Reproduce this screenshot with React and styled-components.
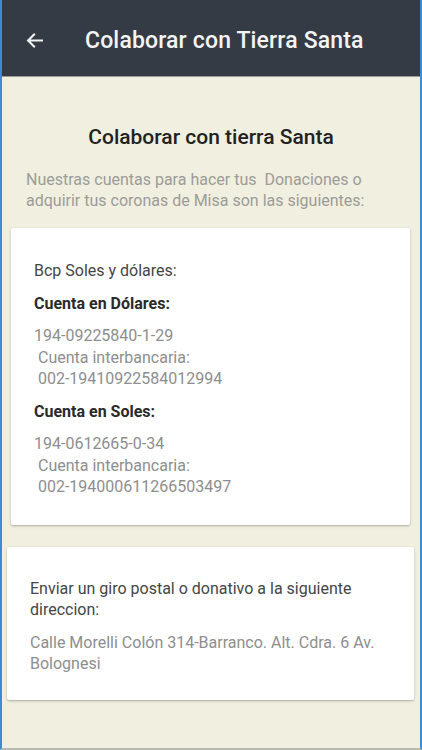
import React from "react";
import styled, { createGlobalStyle } from "styled-components";

const Global = createGlobalStyle`
  html, body { margin: 0; padding: 0; background: #f1efe0; }
  body { font-family: Roboto, "Noto Sans", Arial, sans-serif; }
  * { box-sizing: border-box; }
`;

const Frame = styled.div`
  width: 422px;
  height: 750px;
  background: #f1efe0;
  border-left: 2px solid #3d8ad6;
  border-right: 2px solid #3d8ad6;
  border-bottom: 2px solid #b9b9b4;
  display: flex;
  flex-direction: column;
  overflow: hidden;
`;

const Toolbar = styled.header`
  height: 77px;
  flex: none;
  background: #343b44;
  border-bottom: 1px solid #9a9c98;
  display: flex;
  align-items: center;
  padding: 5px 0 0 21px;
  color: #fff;
`;

const BackButton = styled.span`
  width: 22px;
  height: 22px;
  display: flex;
  align-items: center;
  justify-content: center;
`;

const ToolbarTitle = styled.h1`
  margin: 0 0 0 40px;
  font-size: 23px;
  line-height: 28px;
  font-weight: 500;
  letter-spacing: 0.15px;
  color: #f4f4f4;
`;

const Content = styled.main`
  display: flex;
  flex-direction: column;
  padding: 47px 10px 0 9px;
`;

const Heading = styled.h2`
  margin: 0;
  text-align: center;
  font-size: 21px;
  line-height: 26px;
  font-weight: 500;
  color: #222;
  padding-left: 1px;
`;

const Intro = styled.p`
  margin: 20px 0 0 15px;
  font-size: 16px;
  line-height: 20.5px;
  color: #9c9c98;
`;

const Card = styled.section`
  background: #fff;
  border-radius: 2px;
  box-shadow: 0 1px 3px rgba(0, 0, 0, 0.22), 0 1px 1px rgba(0, 0, 0, 0.08);
  margin: ${(p) => p.$margin};
  padding: ${(p) => p.$padding};
  display: flex;
  flex-direction: column;
`;

const Line = styled.p`
  margin: ${(p) => (p.$gap ? "11px" : "0")} 0 0 0;
  font-size: 16px;
  line-height: 21.5px;
  font-weight: ${(p) => (p.$bold ? 700 : 400)};
  color: ${(p) => (p.$tone === "muted" ? "#8e8e8e" : p.$bold ? "#2a2a2a" : "#454545")};
  white-space: pre-wrap;
`;

const ArrowIcon = () => (
  <svg width="21" height="21" viewBox="0 0 24 24" fill="none">
    <path
      d="M20.5 12H5M11.5 5.2L4.7 12l6.8 6.8"
      stroke="#f2f2f2"
      strokeWidth="2.4"
      strokeLinecap="square"
    />
  </svg>
);

export default function App() {
  return (
    <>
      <Global />
      <Frame>
        <Toolbar>
          <BackButton>
            <ArrowIcon />
          </BackButton>
          <ToolbarTitle>Colaborar con Tierra Santa</ToolbarTitle>
        </Toolbar>
        <Content>
          <Heading>Colaborar con tierra Santa</Heading>
          <Intro>
            Nuestras cuentas para hacer tus&nbsp; Donaciones o adquirir tus coronas de Misa son las siguientes:
          </Intro>
          <Card $margin="17px 0 0 0" $padding="32px 20px 27px 23px">
            <Line>Bcp Soles y dólares:</Line>
            <Line $gap $bold>Cuenta en Dólares:</Line>
            <Line $gap $tone="muted">194-09225840-1-29</Line>
            <Line $tone="muted">{" Cuenta interbancaria:"}</Line>
            <Line $tone="muted">{" 002-19410922584012994"}</Line>
            <Line $gap $bold>Cuenta en Soles:</Line>
            <Line $gap $tone="muted">194-0612665-0-34</Line>
            <Line $tone="muted">{" Cuenta interbancaria:"}</Line>
            <Line $tone="muted">{" 002-194000611266503497"}</Line>
          </Card>
          <Card $margin="22px -4px 0 -4px" $padding="31px 20px 25px 23px">
            <Line>Enviar un giro postal o donativo a la siguiente direccion:</Line>
            <Line $gap $tone="muted">Calle Morelli Colón 314-Barranco. Alt. Cdra. 6 Av. Bolognesi</Line>
          </Card>
        </Content>
      </Frame>
    </>
  );
}
